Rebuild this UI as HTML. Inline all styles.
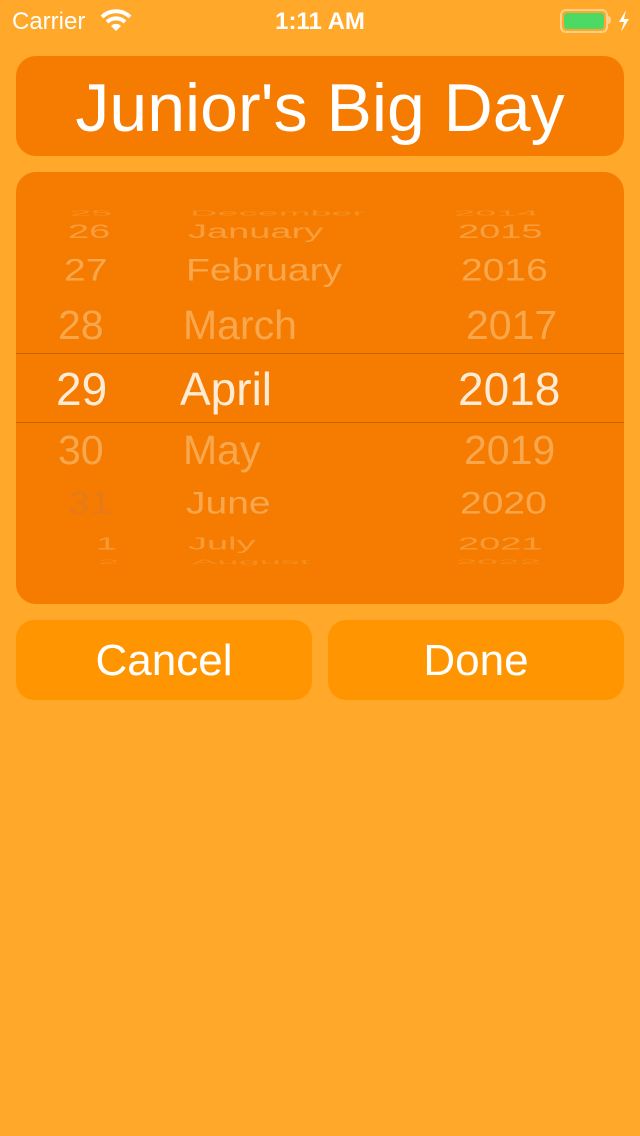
<!DOCTYPE html>
<html><head><style>
body{margin:0;width:640px;height:1136px;background:#FFA829;font-family:"Liberation Sans",sans-serif;position:relative;overflow:hidden;color:#fff}
.abs{position:absolute}
.card{position:absolute;left:16px;width:608px;border-radius:20px;background:#F57C00}
.btn{position:absolute;top:620px;height:80px;width:296px;border-radius:18px;background:#FF9500;font-size:44px;text-align:center;line-height:82px}
.row{position:absolute;white-space:nowrap;transform-origin:left center;line-height:1}
.f{color:rgba(255,220,170,.45)}
</style></head><body>
<div class="abs" style="left:12px;top:8px;font-size:24px">Carrier</div>
<svg class="abs" style="left:100px;top:9px" width="32" height="24" viewBox="0 0 32 24"><path d="M2 8 A20 20 0 0 1 30 8" stroke="#fff" stroke-width="4" fill="none"/><path d="M7 13 A13 13 0 0 1 25 13" stroke="#fff" stroke-width="4" fill="none"/><path d="M16 22 L11 17 A7 7 0 0 1 21 17 Z" fill="#fff"/></svg>
<div class="abs" style="left:0;width:640px;top:8px;text-align:center;font-size:24px;font-weight:bold">1:11 AM</div>
<div class="abs" style="left:560px;top:9px;width:44px;height:20px;border:2px solid #FFD08A;border-radius:6px"></div>
<div class="abs" style="left:564px;top:13px;width:40px;height:16px;background:#4CD964;border-radius:3px"></div>
<div class="abs" style="left:608px;top:16px;width:3px;height:8px;background:#FFD08A;border-radius:0 3px 3px 0"></div>
<svg class="abs" style="left:616px;top:9px" width="16" height="24" viewBox="0 0 16 24"><path d="M10 1 L3 13 H8 L5 23 L13 10 H8 Z" fill="#fff"/></svg>

<div class="card" style="top:56px;height:100px;text-align:center;font-size:68px;line-height:104px">Junior's Big Day</div>
<div class="card" style="top:172px;height:432px"></div>
<div class="abs" style="left:16px;top:353px;width:608px;height:1px;background:#C86400"></div>
<div class="abs" style="left:16px;top:422px;width:608px;height:1px;background:#C86400"></div>

<div class="row f" style="left:70px;top:194px;font-size:38px;opacity:.5;transform:scaleY(.2)">25</div>
<div class="row f" style="left:190px;top:194px;font-size:38px;opacity:.5;transform:scaleY(.2)">December</div>
<div class="row f" style="left:454px;top:194px;font-size:38px;opacity:.5;transform:scaleY(.2)">2014</div>

<div class="row f" style="left:68px;top:213px;font-size:38px;transform:scaleY(.5);opacity:.8">26</div>
<div class="row f" style="left:188px;top:213px;font-size:38px;transform:scaleY(.5);opacity:.8">January</div>
<div class="row f" style="left:458px;top:213px;font-size:38px;transform:scaleY(.5);opacity:.8">2015</div>

<div class="row f" style="left:64px;top:251px;font-size:39px;transform:scaleY(.8)">27</div>
<div class="row f" style="left:186px;top:251px;font-size:39px;transform:scaleY(.8)">February</div>
<div class="row f" style="left:461px;top:251px;font-size:39px;transform:scaleY(.8)">2016</div>

<div class="row f" style="left:58px;top:305px;font-size:41px">28</div>
<div class="row f" style="left:183px;top:305px;font-size:41px">March</div>
<div class="row f" style="left:466px;top:305px;font-size:41px">2017</div>

<div class="row" style="left:56px;top:366px;font-size:46px;color:#FFEBD6">29</div>
<div class="row" style="left:180px;top:366px;font-size:46px;color:#FFEBD6">April</div>
<div class="row" style="left:458px;top:366px;font-size:46px;color:#FFEBD6">2018</div>

<div class="row f" style="left:58px;top:430px;font-size:41px">30</div>
<div class="row f" style="left:183px;top:430px;font-size:41px">May</div>
<div class="row f" style="left:464px;top:430px;font-size:41px">2019</div>

<div class="row" style="left:68px;top:484px;font-size:39px;color:rgba(220,120,40,.6);transform:scaleY(.8)">31</div>
<div class="row f" style="left:186px;top:484px;font-size:39px;transform:scaleY(.8)">June</div>
<div class="row f" style="left:460px;top:484px;font-size:39px;transform:scaleY(.8)">2020</div>

<div class="row f" style="left:96px;top:525px;font-size:38px;transform:scaleY(.45);opacity:.7">1</div>
<div class="row f" style="left:188px;top:525px;font-size:38px;transform:scaleY(.45);opacity:.7">July</div>
<div class="row f" style="left:458px;top:525px;font-size:38px;transform:scaleY(.45);opacity:.7">2021</div>

<div class="row f" style="left:98px;top:543px;font-size:38px;opacity:.4;transform:scaleY(.18)">2</div>
<div class="row f" style="left:192px;top:543px;font-size:38px;opacity:.4;transform:scaleY(.18)">August</div>
<div class="row f" style="left:456px;top:543px;font-size:38px;opacity:.4;transform:scaleY(.18)">2022</div>

<div class="btn" style="left:16px">Cancel</div>
<div class="btn" style="left:328px">Done</div>
</body></html>
